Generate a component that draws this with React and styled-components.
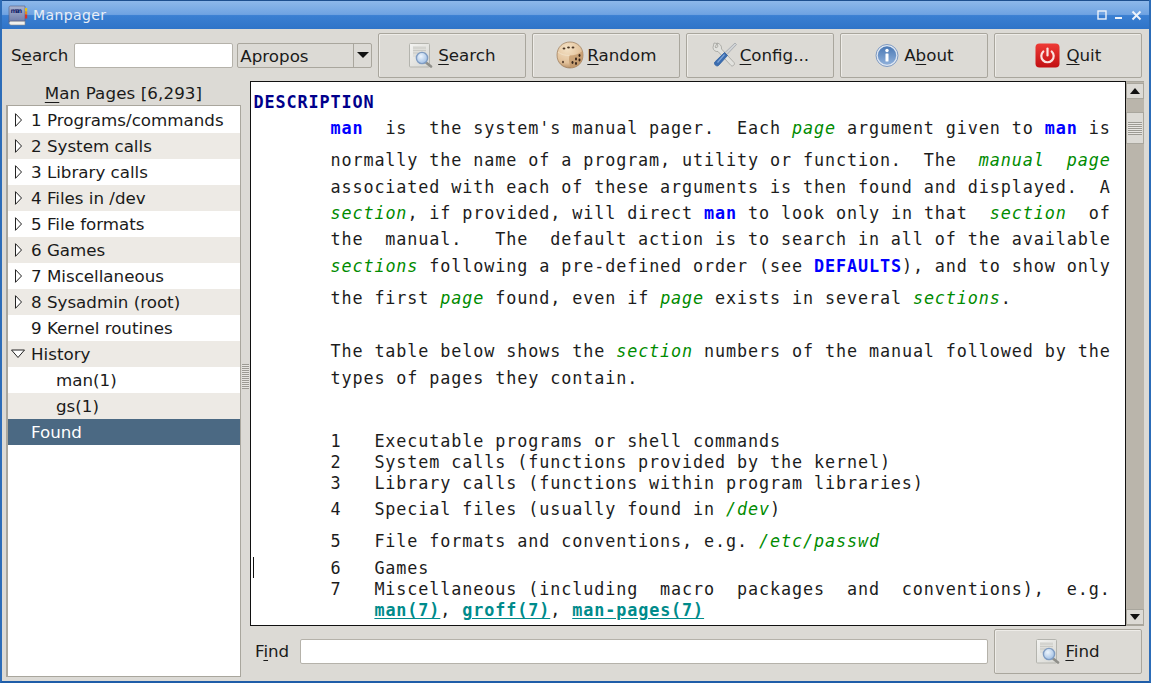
import React from "react";
import styled, { createGlobalStyle } from "styled-components";

const GlobalStyle = createGlobalStyle`
  html, body { margin: 0; padding: 0; background: #dcdad5; }
  body { font-family: "DejaVu Sans", sans-serif; font-size: 16.7px; color: #1a1a1a; }
`;

const Window = styled.div`
  width: 1151px;
  height: 683px;
  display: flex;
  flex-direction: column;
  overflow: hidden;
  background: #dcdad5;
  border-left: 2px solid #2c6cb8;
  border-right: 2px solid #2c6cb8;
  border-bottom: 2px solid #1f5da8;
  box-sizing: border-box;
`;
const TitleBar = styled.div`
  height: 29px;
  margin: 0 -2px;
  flex: none;
  display: flex;
  align-items: center;
  padding: 0 9px 0 7px;
  gap: 4px;
  color: #e8eef7;
  font-size: 14px;
  letter-spacing: 0.4px;
  border-top: 1px solid #1d4f8f;
  box-sizing: border-box;
  background: linear-gradient(#8db8ea 0%, #6fa3e2 48%, #3a7fd2 52%, #2f74c8 100%);
`;
const TitleText = styled.span`
  flex: 1;
`;
const TitleButtons = styled.div`
  display: flex;
  align-items: center;
  gap: 7px;
`;
const Toolbar = styled.div`
  height: 48px;
  flex: none;
  margin-top: 2px;
  display: flex;
  align-items: center;
  padding: 0 7px 0 9px;
`;
const Label = styled.label`
  margin-right: ${(p) => p.$gap}px;
`;
const Key = styled.span`
  text-decoration: underline;
  text-decoration-thickness: 1px;
  text-underline-offset: 3px;
`;
const TextField = styled.div`
  height: 25px;
  width: ${(p) => (p.$grow ? "auto" : `${p.$w}px`)};
  flex: ${(p) => (p.$grow ? 1 : "none")};
  box-sizing: border-box;
  background: #fff;
  border: 1px solid #b5b2aa;
  border-radius: 2px;
`;
const Combo = styled.div`
  width: 135px;
  height: 25px;
  margin: 0 6px 0 4px;
  flex: none;
  display: flex;
  box-sizing: border-box;
  border: 1px solid #a9a69d;
  border-radius: 2px;
  background: #dcdad5;
`;
const ComboValue = styled.div`
  flex: 1;
  padding-left: 2px;
  line-height: 24px;
  border-right: 1px solid #a9a69d;
`;
const ComboArrow = styled.div`
  width: 17px;
  display: flex;
  align-items: center;
  justify-content: center;
  &::after {
    content: "";
    border-left: 6px solid transparent;
    border-right: 6px solid transparent;
    border-top: 6px solid #111;
  }
`;
const Buttons = styled.div`
  display: flex;
  gap: 6px;
  margin-left: ${(p) => p.$offset ?? 0}px;
`;
const Button = styled.button`
  width: 148px;
  height: 45px;
  flex: none;
  display: flex;
  align-items: center;
  justify-content: center;
  gap: ${(p) => p.$gap ?? 5}px;
  padding: 0;
  font: inherit;
  color: #1a1a1a;
  background: #dcdad5;
  border: 1px solid #a9a69d;
  border-radius: 2px;
  box-shadow: inset 1px 1px 0 #eeece8;
`;
const Main = styled.div`
  flex: 1;
  min-height: 0;
  display: flex;
  padding: 0 7px 4px 4px;
`;
const Sidebar = styled.div`
  width: 235px;
  flex: none;
  display: flex;
  flex-direction: column;
`;
const SidebarTitle = styled.div`
  height: 26px;
  flex: none;
  text-align: center;
  line-height: 28px;
  letter-spacing: 0.1px;
`;
const Tree = styled.div`
  flex: 1;
  background: #fff;
  border: 1px solid #a9a69d;
  border-left-width: 2px;
  padding-top: 1px;
  box-sizing: border-box;
`;
const Row = styled.div`
  height: 26px;
  display: flex;
  align-items: center;
  box-sizing: border-box;
  padding-left: ${(p) => p.$indent}px;
  background: ${(p) => (p.$selected ? "#4b6983" : p.$alt ? "#edeae5" : "#fff")};
  color: ${(p) => (p.$selected ? "#fff" : "#1a1a1a")};
`;
const Expander = styled.svg`
  width: 14px;
  height: 14px;
  margin: 0 6px 0 3px;
  flex: none;
`;
const Splitter = styled.div`
  width: 9px;
  flex: none;
  display: flex;
  align-items: center;
  justify-content: center;
  &::after {
    content: "";
    width: 7px;
    height: 25px;
    margin-top: -4px;
    background: repeating-linear-gradient(#9c9a93 0 1px, #e8e6e2 1px 2px);
  }
`;
const Content = styled.div`
  flex: 1;
  min-width: 0;
  display: flex;
  flex-direction: column;
`;
const DocRow = styled.div`
  height: 545px;
  margin: 2px -2px 0 0;
  flex: none;
  display: flex;
`;
const Doc = styled.div`
  position: relative;
  flex: 1;
  min-width: 0;
  display: flex;
  box-sizing: border-box;
  background: #fff;
  border: 1px solid #111;
  font-family: "DejaVu Sans Mono", monospace;
  font-size: 16.8px;
  letter-spacing: 0.886px;
  color: #1c1c1c;
`;
const DocText = styled.div`
  flex: 1;
  min-width: 0;
  overflow: hidden;
  margin-bottom: 2px;
  padding: 10px 0 0 2.5px;
`;
const Line = styled.div`
  height: 21px;
  line-height: 21px;
  white-space: pre;
  margin-top: ${(p) => p.$gap ?? 0}px;
`;
const Heading = styled.b`
  color: #00008b;
`;
const Name = styled.b`
  color: #0000ff;
`;
const Arg = styled.i`
  color: #008b00;
`;
const Ref = styled.b`
  color: #008b8b;
  text-decoration: underline;
  text-underline-offset: 2px;
`;
const Caret = styled.div`
  position: absolute;
  left: 2px;
  top: 475px;
  width: 1px;
  height: 21px;
  background: #111;
`;
const Scrollbar = styled.div`
  width: 18px;
  flex: none;
  display: flex;
  flex-direction: column;
  box-sizing: border-box;
  background: #bab5ab;
  border-top: 1px solid #a9a69d;
  border-bottom: 1px solid #a9a69d;
  padding-top: 1px;
`;
const ScrollArrow = styled.div`
  height: 16px;
  flex: none;
  display: flex;
  align-items: center;
  justify-content: center;
  background: #dcdad5;
  border: 1px solid #a9a69d;
  box-sizing: border-box;
  &::after {
    content: "";
    border-left: 5px solid transparent;
    border-right: 5px solid transparent;
    ${(p) => (p.$down ? "border-top: 6px solid #111;" : "border-bottom: 6px solid #111;")}
  }
`;
const ScrollThumb = styled.div`
  height: 32px;
  margin-top: 13px;
  flex: none;
  display: flex;
  align-items: center;
  justify-content: center;
  box-sizing: border-box;
  background: #dcdad5;
  border: 1px solid #a9a69d;
  &::after {
    content: "";
    width: 14px;
    height: 13px;
    background: repeating-linear-gradient(#9c9a93 0 1px, #e8e6e2 1px 2px);
  }
`;
const ScrollSpace = styled.div`
  flex: 1;
`;
const FindBar = styled.div`
  flex: 1;
  display: flex;
  align-items: center;
  padding: 0 0 3px 5px;
  margin-top: 2px;
`;

const BookIcon = () => (
  <svg width="22" height="21" viewBox="0 0 22 21">
    <defs>
      <linearGradient id="cover" x1="0" y1="0" x2="0" y2="1">
        <stop offset="0" stopColor="#a9b3d0" />
        <stop offset="1" stopColor="#6d7ba8" />
      </linearGradient>
    </defs>
    <path d="M2 17.500c0-1 1-1.500 2-1.500h14v4H4c-1 0-2-1-2-2.500z" fill="#f1f1ee" stroke="#8c8c88" strokeWidth="0.6" />
    <path d="M2 17.500V2.500C2 1.500 2.800 1 3.500 1H18v15H4c-1 0-2 .5-2 1.500z" fill="url(#cover)" stroke="#55607f" strokeWidth="0.6" />
    <text x="3.500" y="8" fontFamily="DejaVu Sans" fontSize="6.500" fontWeight="bold" fill="#1c2a70" textLength="12">man</text>
    <rect x="18" y="3" width="2.200" height="3.500" fill="#e4c21a" />
    <rect x="18" y="6.500" width="2.200" height="3" fill="#e48a1a" />
    <rect x="18" y="9.500" width="2.200" height="4" fill="#d8312a" />
  </svg>
);

const SearchDocIcon = ({ id }) => (
  <svg width="24" height="25" viewBox="0 0 24 25">
    <defs>
      <linearGradient id={`page-${id}`} x1="0" y1="0" x2="1" y2="1">
        <stop offset="0" stopColor="#f4f4f2" />
        <stop offset="1" stopColor="#d6d6d1" />
      </linearGradient>
      <radialGradient id={`lens-${id}`} cx="0.4" cy="0.35" r="0.7">
        <stop offset="0" stopColor="#eef5fc" />
        <stop offset="1" stopColor="#9dbde3" />
      </radialGradient>
    </defs>
    <rect x="0.500" y="0.500" width="20" height="23.500" rx="1" fill={`url(#page-${id})`} stroke="#b4b4ae" />
    <rect x="4" y="3" width="13" height="11" fill="#dededa" />
    <path d="M4 5h13M4 7.500h13M4 10h13" stroke="#c9c9c4" />
    <path d="M17 19.500l5 4" stroke="#8f8f8a" strokeWidth="2.600" strokeLinecap="round" />
    <circle cx="13" cy="15" r="5.600" fill={`url(#lens-${id})`} stroke="#7f9cc2" strokeWidth="1.400" />
  </svg>
);

const DiceIcon = () => (
  <svg width="28" height="28" viewBox="0 0 28 28">
    <defs>
      <radialGradient id="die" cx="0.4" cy="0.25" r="0.85">
        <stop offset="0" stopColor="#f4e2c6" />
        <stop offset="0.65" stopColor="#e2c19a" />
        <stop offset="1" stopColor="#a67c52" />
      </radialGradient>
    </defs>
    <path d="M14 1C21 1 27 6 27 14c0 8-6 13-13 13C7 27 1 22 1 14 1 6 7 1 14 1z" fill="url(#die)" stroke="#8d6a46" strokeWidth="0.6" />
    <path d="M15 27c-2-5-2.500-9-1.500-12.500 5 0 9-1.500 13-4.500 2 8-2 16-11.500 17z" fill="#c39a6d" opacity="0.8" />
    <path d="M2 11c3 2.500 7 3.500 11.500 3.500" fill="none" stroke="#f3e3cb" strokeWidth="0.8" />
    <ellipse cx="8" cy="7.500" rx="1.400" ry="0.900" fill="#4a3524" />
    <ellipse cx="12.500" cy="6.500" rx="1.400" ry="0.900" fill="#4a3524" />
    <ellipse cx="17" cy="6.500" rx="1.400" ry="0.900" fill="#4a3524" />
    <ellipse cx="7" cy="21" rx="1" ry="1.300" fill="#5d4430" />
    <ellipse cx="16.500" cy="21.500" rx="1" ry="1.400" fill="#35241a" />
    <ellipse cx="20" cy="18" rx="1" ry="1.400" fill="#35241a" />
    <ellipse cx="23.500" cy="14.500" rx="1" ry="1.400" fill="#35241a" />
    <ellipse cx="20" cy="22.500" rx="1" ry="1.400" fill="#35241a" />
    <ellipse cx="23.500" cy="19" rx="1" ry="1.400" fill="#35241a" />
  </svg>
);

const ToolsIcon = () => (
  <svg width="25" height="26" viewBox="0 0 25 26">
    <path d="M5 1.500L2 1 1 5.500c0 2.500 2.500 4.500 5 4L19 23.500c1.500 1.500 4.500-1 3-3L9.500 7C10 4 8 1.500 5 1l1 3.500-2 1.500-1-1z" fill="#e2e2de" stroke="#a2a29d" strokeWidth="0.8" strokeLinejoin="round" />
    <path d="M23 1l1.500 1.500-9.500 10-2.500-1.500z" fill="#d0d3d6" stroke="#9a9ea3" strokeWidth="0.7" />
    <path d="M12.500 10.500l3 3-9 10c-1.800 1.500-5-1-3.700-3.500z" fill="#3b6db0" stroke="#2f5f9f" strokeWidth="0.8" />
    <path d="M12.500 12.500l-7 8" stroke="#7ea5d8" strokeWidth="1.200" />
  </svg>
);

const InfoIcon = () => (
  <svg width="24" height="25" viewBox="0 0 24 25">
    <defs>
      <linearGradient id="info" x1="0" y1="0" x2="0" y2="1">
        <stop offset="0" stopColor="#4a78b4" />
        <stop offset="1" stopColor="#8fb0da" />
      </linearGradient>
    </defs>
    <circle cx="12" cy="12.500" r="11" fill="#dfe7f2" stroke="#7d99c0" />
    <circle cx="12" cy="12.500" r="9.200" fill="url(#info)" />
    <circle cx="12" cy="7.500" r="1.700" fill="#fff" />
    <rect x="10.500" y="10.500" width="3" height="8" rx="0.500" fill="#fff" />
  </svg>
);

const PowerIcon = () => (
  <svg width="25" height="25" viewBox="0 0 25 25">
    <defs>
      <linearGradient id="power" x1="0" y1="0" x2="0" y2="1">
        <stop offset="0" stopColor="#ee3b36" />
        <stop offset="1" stopColor="#c20f12" />
      </linearGradient>
    </defs>
    <rect x="0.500" y="0.500" width="24" height="24" rx="4" fill="url(#power)" />
    <path d="M8.300 8.500a6.200 6.200 0 1 0 8.400 0" fill="none" stroke="#fbe3e0" strokeWidth="2.200" strokeLinecap="round" />
    <path d="M12.500 5.500v7" stroke="#fbe3e0" strokeWidth="2.200" strokeLinecap="round" />
  </svg>
);

const Collapsed = () => (
  <Expander viewBox="0 0 14 14">
    <path d="M4.500 0.700L10.500 7L4.500 13.300z" fill="#fff" stroke="#222" />
  </Expander>
);
const Expanded = () => (
  <Expander viewBox="0 0 14 14">
    <path d="M0.500 3H13.500L7 10.500z" fill="#fff" stroke="#222" />
  </Expander>
);

const sections = [
  "1 Programs/commands",
  "2 System calls",
  "3 Library calls",
  "4 Files in /dev",
  "5 File formats",
  "6 Games",
  "7 Miscellaneous",
  "8 Sysadmin (root)",
];

const toolButtons = [
  { icon: <SearchDocIcon id="search" />, before: "", key: "S", after: "earch", gap: 5 },
  { icon: <DiceIcon />, before: "", key: "R", after: "andom", gap: 3 },
  { icon: <ToolsIcon />, before: "", key: "C", after: "onfig...", gap: 3 },
  { icon: <InfoIcon />, before: "A", key: "b", after: "out", gap: 5 },
  { icon: <PowerIcon />, before: "", key: "Q", after: "uit", gap: 6 },
];

export default function App() {
  return (
    <Window>
      <GlobalStyle />
      <TitleBar>
        <BookIcon />
        <TitleText>Manpager</TitleText>
        <TitleButtons>
          <svg width="10" height="10" viewBox="0 0 10 10">
            <rect x="1" y="1" width="8" height="8" fill="none" stroke="#eef3fa" strokeWidth="1.400" />
          </svg>
          <svg width="10" height="10" viewBox="0 0 10 10">
            <rect x="1" y="7" width="7" height="2" fill="#eef3fa" />
          </svg>
          <svg width="11" height="11" viewBox="0 0 11 11">
            <path d="M1.500 1.500l8 8M9.500 1.500l-8 8" stroke="#eef3fa" strokeWidth="2" />
          </svg>
        </TitleButtons>
      </TitleBar>
      <Toolbar>
        <Label $gap={6}>S<Key>e</Key>arch</Label>
        <TextField $w={159} />
        <Combo>
          <ComboValue>Apropos</ComboValue>
          <ComboArrow />
        </Combo>
        <Buttons>
          {toolButtons.map((b) => (
            <Button key={b.key} $gap={b.gap}>
              {b.icon}
              <span>
                {b.before}
                <Key>{b.key}</Key>
                {b.after}
              </span>
            </Button>
          ))}
        </Buttons>
      </Toolbar>
      <Main>
        <Sidebar>
          <SidebarTitle><Key>M</Key>an Pages [6,293]</SidebarTitle>
          <Tree>
            {sections.map((s, i) => (
              <Row key={s} $alt={i % 2 === 1} $indent={0}>
                <Collapsed />
                {s}
              </Row>
            ))}
            <Row $indent={23}>9 Kernel routines</Row>
            <Row $alt $indent={0}>
              <Expanded />
              History
            </Row>
            <Row $indent={48}>man(1)</Row>
            <Row $alt $indent={48}>gs(1)</Row>
            <Row $selected $indent={23}>Found</Row>
          </Tree>
        </Sidebar>
        <Splitter />
        <Content>
          <DocRow>
            <Doc>
              <DocText>
                <Line><Heading>DESCRIPTION</Heading></Line>
                <Line $gap={5}>{"       "}<Name>man</Name>{"  is  the system's manual pager.  Each "}<Arg>page</Arg>{" argument given to "}<Name>man</Name>{" is"}</Line>
                <Line $gap={11}>{"       normally the name of a program, utility or function.  The  "}<Arg>manual</Arg>{"  "}<Arg>page</Arg></Line>
                <Line $gap={6}>{"       associated with each of these arguments is then found and displayed.  A"}</Line>
                <Line $gap={5}>{"       "}<Arg>section</Arg>{", if provided, will direct "}<Name>man</Name>{" to look only in that  "}<Arg>section</Arg>{"  of"}</Line>
                <Line $gap={5}>{"       the  manual.   The  default action is to search in all of the available"}</Line>
                <Line $gap={6}>{"       "}<Arg>sections</Arg>{" following a pre-defined order (see "}<Name>DEFAULTS</Name>{"), and to show only"}</Line>
                <Line $gap={11}>{"       the first "}<Arg>page</Arg>{" found, even if "}<Arg>page</Arg>{" exists in several "}<Arg>sections</Arg>{"."}</Line>
                <Line $gap={32}>{"       The table below shows the "}<Arg>section</Arg>{" numbers of the manual followed by the"}</Line>
                <Line $gap={6}>{"       types of pages they contain."}</Line>
                <Line $gap={42}>{"       1   Executable programs or shell commands"}</Line>
                <Line>{"       2   System calls (functions provided by the kernel)"}</Line>
                <Line>{"       3   Library calls (functions within program libraries)"}</Line>
                <Line $gap={5}>{"       4   Special files (usually found in "}<Arg>/dev</Arg>{")"}</Line>
                <Line $gap={11}>{"       5   File formats and conventions, e.g. "}<Arg>/etc/passwd</Arg></Line>
                <Line $gap={6}>{"       6   Games"}</Line>
                <Line>{"       7   Miscellaneous (including  macro  packages  and  conventions),  e.g."}</Line>
                <Line>{"           "}<Ref>man(7)</Ref>{", "}<Ref>groff(7)</Ref>{", "}<Ref>man-pages(7)</Ref></Line>
                <Line>{"       8   System administration commands (usually only for root)"}</Line>
              </DocText>
              <Caret />
            </Doc>
            <Scrollbar>
              <ScrollArrow />
              <ScrollThumb />
              <ScrollSpace />
              <ScrollArrow $down />
            </Scrollbar>
          </DocRow>
          <FindBar>
            <Label $gap={11}>F<Key>i</Key>nd</Label>
            <TextField $grow />
            <Buttons $offset={6}>
              <Button $gap={5}>
                <SearchDocIcon id="find" />
                <span><Key>F</Key>ind</span>
              </Button>
            </Buttons>
          </FindBar>
        </Content>
      </Main>
    </Window>
  );
}
